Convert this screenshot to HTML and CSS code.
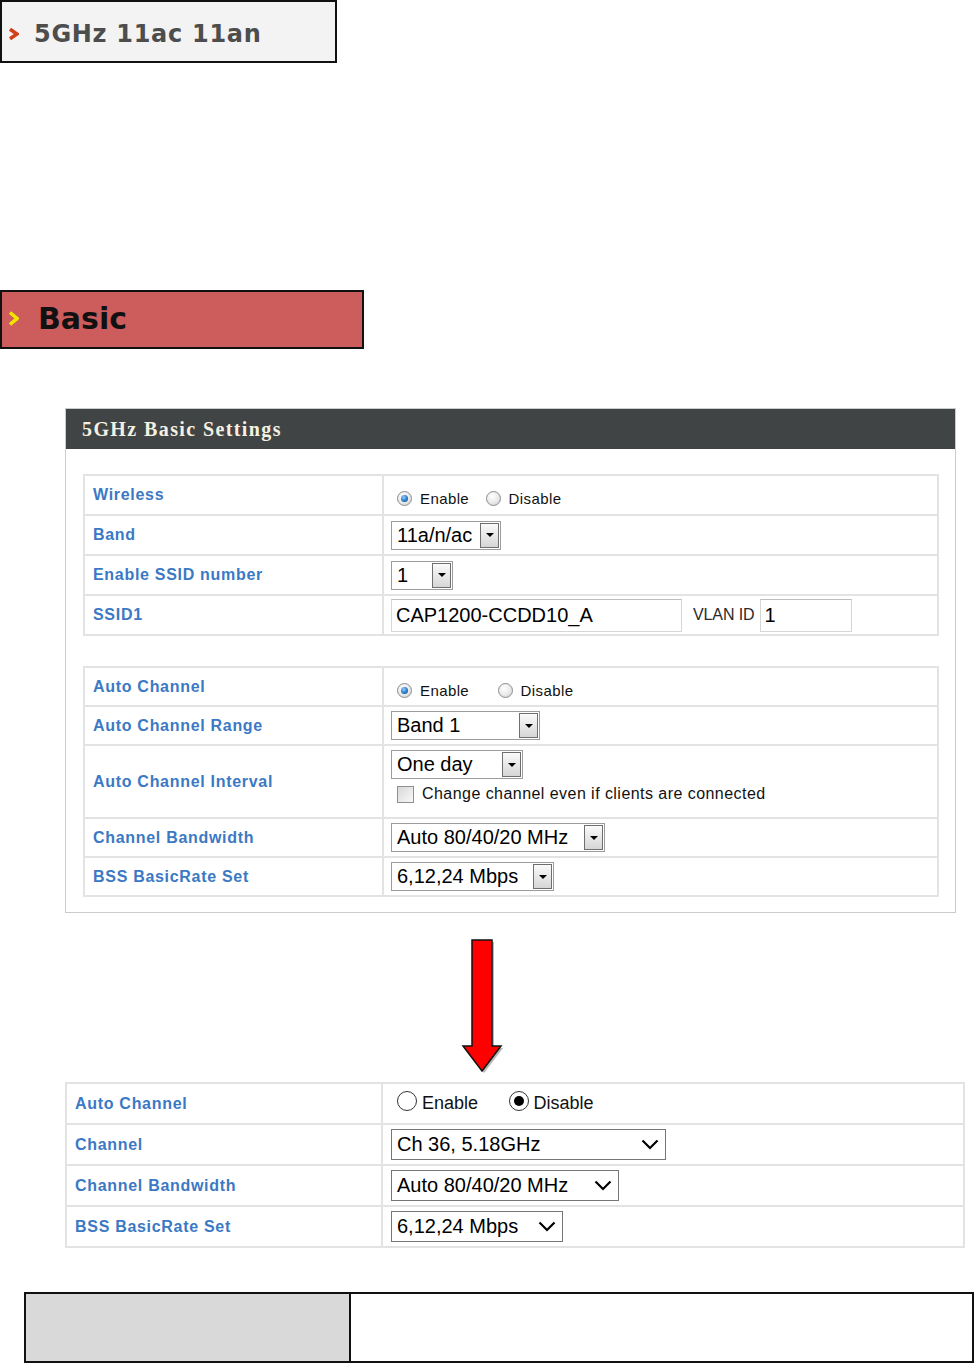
FILE: index.html
```html
<!DOCTYPE html>
<html>
<head>
<meta charset="utf-8">
<title>5GHz Basic Settings</title>
<link rel="stylesheet" href="styles.css">
</head>
<body>
<div class="page">
  <div class="tab tab-top">
    <svg class="chev" viewBox="0 0 11 12"><path d="M2 1.2 L9 6 L2 10.8" fill="none" stroke="#d2401a" stroke-width="3.6"/></svg>
    <span class="tab-title">5GHz 11ac 11an</span>
  </div>

  <div class="tab tab-basic">
    <svg class="chev chev-y" viewBox="0 0 11 15"><path d="M2 1.5 L9 7.5 L2 13.5" fill="none" stroke="#f2e600" stroke-width="3.6"/></svg>
    <span class="tab-title">Basic</span>
  </div>

  <section class="panel">
    <div class="panel-head">5GHz Basic Settings</div>
    <div class="panel-body">
      <table class="grid">
        <tr>
          <td class="lbl">Wireless</td>
          <td class="val val-radio">
            <span class="opt"><span class="rd on"></span>Enable</span>
            <span class="opt opt-2"><span class="rd"></span>Disable</span>
          </td>
        </tr>
        <tr>
          <td class="lbl">Band</td>
          <td class="val"><span class="sel w-band"><span class="sel-v">11a/n/ac</span><span class="sel-b"></span></span></td>
        </tr>
        <tr>
          <td class="lbl">Enable SSID number</td>
          <td class="val"><span class="sel w-num"><span class="sel-v">1</span><span class="sel-b"></span></span></td>
        </tr>
        <tr>
          <td class="lbl">SSID1</td>
          <td class="val">
            <span class="txt w-ssid">CAP1200-CCDD10_A</span><span class="vlan">VLAN ID</span><span class="txt w-vlan">1</span>
          </td>
        </tr>
      </table>

      <table class="grid grid-2">
        <tr>
          <td class="lbl">Auto Channel</td>
          <td class="val val-radio">
            <span class="opt"><span class="rd on"></span>Enable</span>
            <span class="opt opt-wide"><span class="rd"></span>Disable</span>
          </td>
        </tr>
        <tr>
          <td class="lbl">Auto Channel Range</td>
          <td class="val"><span class="sel w-range"><span class="sel-v">Band 1</span><span class="sel-b"></span></span></td>
        </tr>
        <tr class="tall">
          <td class="lbl">Auto Channel Interval</td>
          <td class="val val-stack">
            <span class="sel w-day"><span class="sel-v">One day</span><span class="sel-b"></span></span>
            <span class="chk-line"><span class="chk"></span>Change channel even if clients are connected</span>
          </td>
        </tr>
        <tr>
          <td class="lbl">Channel Bandwidth</td>
          <td class="val"><span class="sel w-bw"><span class="sel-v">Auto 80/40/20 MHz</span><span class="sel-b"></span></span></td>
        </tr>
        <tr>
          <td class="lbl">BSS BasicRate Set</td>
          <td class="val"><span class="sel w-bss"><span class="sel-v">6,12,24 Mbps</span><span class="sel-b"></span></span></td>
        </tr>
      </table>
    </div>
  </section>

  <div class="arrow-wrap">
    <svg class="arrow" viewBox="0 0 50 140" width="50" height="140">
      <polygon points="16,6 36,6 36,112 45,112 26,137 7,112 16,112" fill="#b5b5b5"/>
      <polygon points="14,4 34,4 34,110 43,110 24,135 5,110 14,110" fill="#ff0000" stroke="#111" stroke-width="1.5" stroke-linejoin="miter"/>
    </svg>
  </div>

  <table class="grid grid-new">
    <tr>
      <td class="lbl">Auto Channel</td>
      <td class="val">
        <span class="nopt"><span class="nrd"></span>Enable</span>
        <span class="nopt nopt-2"><span class="nrd on"></span>Disable</span>
      </td>
    </tr>
    <tr>
      <td class="lbl">Channel</td>
      <td class="val"><span class="nsel w-ch">Ch 36, 5.18GHz<svg class="nchev" viewBox="0 0 18 11"><path d="M1.5 1.5 L9 9 L16.5 1.5" fill="none" stroke="#000" stroke-width="2.2"/></svg></span></td>
    </tr>
    <tr>
      <td class="lbl">Channel Bandwidth</td>
      <td class="val"><span class="nsel w-nbw">Auto 80/40/20 MHz<svg class="nchev" viewBox="0 0 18 11"><path d="M1.5 1.5 L9 9 L16.5 1.5" fill="none" stroke="#000" stroke-width="2.2"/></svg></span></td>
    </tr>
    <tr>
      <td class="lbl">BSS BasicRate Set</td>
      <td class="val"><span class="nsel w-nbss">6,12,24 Mbps<svg class="nchev" viewBox="0 0 18 11"><path d="M1.5 1.5 L9 9 L16.5 1.5" fill="none" stroke="#000" stroke-width="2.2"/></svg></span></td>
    </tr>
  </table>

  <div class="note">
    <div class="note-l"></div>
    <div class="note-r"></div>
  </div>
</div>
</body>
</html>
```

FILE: styles.css
```css
* { box-sizing: border-box; }

body {
  margin: 0;
  background: #fff;
  font-family: "Liberation Sans", Arial, sans-serif;
  color: #000;
}

.page { width: 975px; }

/* section tabs */
.tab {
  display: flex;
  align-items: center;
  border: 2px solid #111;
}
.tab-top {
  width: 337px;
  height: 63px;
  background: #f3f3f3;
  padding: 4px 0 0 6px;
}
.chev { width: 11px; height: 12px; margin-right: 15px; flex: none; }
.tab-top .tab-title {
  font-family: "DejaVu Sans", Verdana, sans-serif;
  font-weight: bold;
  font-size: 24px;
  letter-spacing: 0.7px;
  color: #4d4d4d;
}
.tab-basic {
  margin-top: 227px;
  width: 364px;
  height: 59px;
  background: #cd5c5c;
  padding: 0 0 2px 6px;
}
.chev-y { height: 15px; margin-right: 19px; }
.tab-basic .tab-title {
  font-family: "DejaVu Sans", Verdana, sans-serif;
  font-weight: bold;
  font-size: 30px;
  color: #111;
}

/* settings panel */
.panel {
  margin: 59px 0 0 65px;
  width: 891px;
  border: 1px solid #cbcbcb;
}
.panel-head {
  height: 40px;
  line-height: 40px;
  background: #414444;
  color: #f4f1e2;
  font-family: "Liberation Serif", "Times New Roman", serif;
  font-weight: bold;
  font-size: 20px;
  letter-spacing: 1.4px;
  padding-left: 16px;
}
.panel-body { padding: 25px 16px 15px 17px; }

/* grid tables */
.grid {
  border-collapse: collapse;
  table-layout: fixed;
  width: 856px;
}
.grid td {
  border: 2px solid #e3e3e3;
  height: 40px;
  padding: 0;
  vertical-align: middle;
}
.grid-2 { margin-top: 30px; }
.grid-2 td { height: 39px; }
.grid-2 tr.tall td { height: 73px; }
.grid .lbl {
  width: 299px;
  padding-left: 8px;
  color: #3b79c4;
  font-weight: bold;
  font-size: 16px;
  letter-spacing: 0.7px;
  white-space: nowrap;
}
.grid .val { padding-left: 7px; }
.grid td.val-radio { padding-top: 10px; }

/* old style radios */
.opt {
  display: inline-flex;
  align-items: center;
  font-size: 15px;
  letter-spacing: 0.4px;
  color: #111;
  margin-left: 6px;
}
.opt-2 { margin-left: 12px; }
.opt-wide { margin-left: 24px; }
.rd {
  width: 15px;
  height: 15px;
  border-radius: 50%;
  border: 1px solid #8e8e8e;
  background: radial-gradient(circle at 40% 35%, #ffffff 0%, #e9e9e9 55%, #c9c9c9 100%);
  margin-right: 8px;
  position: relative;
  flex: none;
}
.rd.on::after {
  content: "";
  position: absolute;
  left: 3px;
  top: 3px;
  width: 7px;
  height: 7px;
  border-radius: 50%;
  background: radial-gradient(circle at 40% 35%, #8fd0ff 0%, #2a78c4 55%, #12467e 100%);
}

/* old style selects */
.sel {
  display: inline-flex;
  align-items: stretch;
  height: 29px;
  border: 1px solid #9c9c9c;
  background: #fff;
  padding: 1px;
  vertical-align: middle;
}
.sel-v {
  flex: 1;
  font-size: 20px;
  line-height: 25px;
  padding-left: 4px;
  white-space: nowrap;
  overflow: hidden;
}
.sel-b {
  width: 19px;
  flex: none;
  border: 1px solid #6f6f6f;
  background: linear-gradient(#fafafa, #d6d6d6);
  display: flex;
  align-items: center;
  justify-content: center;
}
.sel-b::before {
  content: "";
  border-left: 4px solid transparent;
  border-right: 4px solid transparent;
  border-top: 4px solid #000;
}
.w-band { width: 110px; }
.w-num { width: 62px; }
.w-range { width: 149px; }
.w-day { width: 132px; }
.w-bw { width: 214px; }
.w-bss { width: 163px; }

/* text inputs */
.txt {
  display: inline-flex;
  align-items: center;
  height: 33px;
  border: 1px solid #d6d6d6;
  border-top-color: #bdbdbd;
  font-size: 20px;
  padding-left: 4px;
  vertical-align: middle;
}
.w-ssid { width: 291px; }
.w-vlan { width: 92px; }
.vlan {
  font-size: 16px;
  color: #2a2a2a;
  margin: 0 5px 0 11px;
  vertical-align: middle;
  letter-spacing: -0.1px;
}

/* interval cell */
.grid-2 td.val-stack { vertical-align: top; padding-top: 4px; }
.val-stack .sel { display: flex; width: 132px; }
.chk-line {
  display: flex;
  align-items: center;
  margin: 6px 0 0 6px;
  font-size: 16px;
  letter-spacing: 0.45px;
  color: #111;
}
.chk {
  width: 17px;
  height: 17px;
  border: 1px solid #8f8f8f;
  background: linear-gradient(135deg, #d8d8d8, #f8f8f8);
  margin-right: 8px;
  flex: none;
}

/* arrow */
.arrow-wrap { padding: 23px 0 6px 458px; }
.arrow { display: block; }

/* new table */
.grid-new { margin-left: 65px; width: 900px; }
.grid-new td { height: 41px; }
.grid-new .lbl { width: 316px; }
.grid-new .val { padding-left: 8px; }
.nopt {
  display: inline-flex;
  align-items: center;
  font-size: 18px;
  color: #111;
  margin-left: 6px;
}
.nopt-2 { margin-left: 26px; }
.nrd {
  width: 20px;
  height: 20px;
  border-radius: 50%;
  border: 1px solid #333;
  background: #fff;
  margin: 0 5px 5px 0;
  position: relative;
  flex: none;
}
.nrd.on::after {
  content: "";
  position: absolute;
  left: 4px;
  top: 4px;
  width: 10px;
  height: 10px;
  border-radius: 50%;
  background: #000;
}
.nsel {
  display: inline-flex;
  align-items: center;
  justify-content: space-between;
  height: 31px;
  border: 1px solid #767676;
  font-size: 20px;
  padding: 0 6px 0 5px;
  vertical-align: middle;
  white-space: nowrap;
}
.nchev { width: 18px; height: 11px; flex: none; margin-left: 6px; }
.w-ch { width: 275px; }
.w-nbw { width: 228px; }
.w-nbss { width: 172px; }

/* bottom note */
.note {
  display: flex;
  margin: 44px 0 0 24px;
  width: 950px;
  height: 71px;
  border: 2px solid #111;
}
.note-l {
  width: 325px;
  background: #d9d9d9;
  border-right: 2px solid #111;
}
.note-r { flex: 1; background: #fff; }
```
